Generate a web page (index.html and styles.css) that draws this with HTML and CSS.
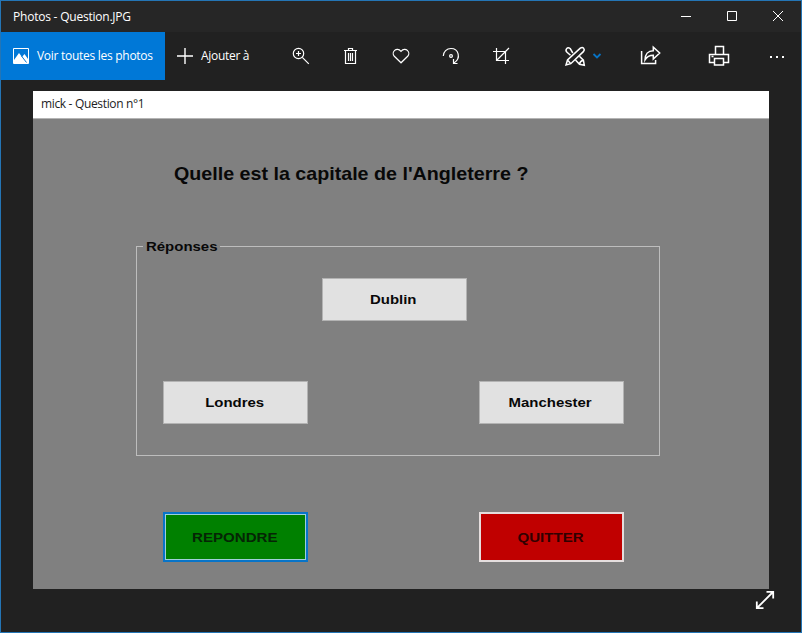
FILE: index.html
```html
<!DOCTYPE html>
<html lang="fr">
<head>
<meta charset="utf-8">
<title>Photos - Question.JPG</title>
<link rel="stylesheet" href="styles.css">
</head>
<body>
<div class="window">
  <header class="titlebar">
    <span class="title">Photos - Question.JPG</span>
    <div class="caption">
      <svg width="46" height="31" viewBox="0 0 46 31"><path d="M18 15.5h10"/></svg>
      <svg width="46" height="31" viewBox="0 0 46 31"><path d="M18.500 10.500h9v9h-9z"/></svg>
      <svg width="46" height="31" viewBox="0 0 46 31"><path d="M18 10l10 10M28 10l-10 10"/></svg>
    </div>
  </header>
  <nav class="toolbar">
    <div class="all-photos">
      <svg width="16" height="16" viewBox="0 0 16 16"><path d="M.5.5h15v15H.5z"/><path class="solid" d="M1 12l5-7 3 4 2.500-3L15 11v4H1z"/><path class="ridge" d="M8.500 8l5 6.500"/></svg>
      <span class="all-label">Voir toutes les photos</span>
    </div>
    <div class="add">
      <svg width="16" height="16" viewBox="0 0 16 16"><path class="plus" d="M8 0v16M0 8h16"/></svg>
      <span class="add-label">Ajouter à</span>
    </div>
    <div class="edit">
      <svg class="icon" viewBox="0 0 24 24"><circle cx="9.500" cy="9.500" r="5.200"/><path d="M13.300 13.300l6.500 6.500M9.500 7v5M7 9.500h5"/></svg>
      <svg class="icon" viewBox="0 0 24 24"><path d="M5 6.500h13M9.500 6V4.500h4V6M6.500 7v12.500h10V7M9.500 9v8M11.500 9v8M13.500 9v8"/></svg>
      <svg class="icon" viewBox="0 0 24 24"><path d="M12 18.800L5.300 12.300C1.800 8.500 7.500 2 12 7.300 16.500 2 22.200 8.500 18.700 12.300z"/></svg>
      <svg class="icon" viewBox="0 0 24 24"><path d="M4.300 12A7.600 7.600 0 0 1 12 4.500C19.500 4.500 22.500 14 15 19M14.500 15v4.500h4"/><circle cx="12" cy="12" r="1.400"/></svg>
      <svg class="icon" viewBox="0 0 24 24"><path d="M7.500 4v12.500H20M4 7.500h12.500V20M7.500 16.500L20 4"/></svg>
    </div>
    <div class="tools">
      <svg class="icon" viewBox="0 0 24 24"><g class="heavy"><path d="M3 21l1.500-5L17.300 4.200q2-1.500 3.300 0t0 3.200L7.800 19.700zM4.500 16l3.300 3.700"/><path d="M9.800 9L7.200 4.500Q5 2.800 3.600 4.600T4 8.200L7.500 11.200M12.500 16l4 4.300 4.800.9-.9-5-4-4M16.500 20q.5-3 3.800-3.800"/></g></svg>
      <svg class="chevron" width="10" height="24" viewBox="0 0 10 24"><path d="M1.500 10L5 13.500 8.500 10"/></svg>
    </div>
    <div class="share">
      <svg class="icon" viewBox="0 0 24 24"><path class="mid" d="M3.600 7v12.400h14V16M7 16C7 10.500 10 6.800 15.300 6.800V3.200L21.700 9l-6.400 6v-3.700C12 11.300 9 12.500 7 16z"/></svg>
    </div>
    <div class="print">
      <svg class="icon" viewBox="0 0 24 24"><path class="mid" d="M8.500 10.500v-8h8v8M7.500 18.500h-5v-8h19v8h-5M7.500 14.500h9V21h-9zM4.500 12.500h2"/></svg>
    </div>
    <div class="more">
      <svg class="icon" viewBox="0 0 24 24"><path class="solid" d="M5 12h2v2H5zM11 12h2v2h-2zM17 12h2v2h-2z"/></svg>
    </div>
  </nav>
  <main class="stage">
    <section class="photo">
      <div class="form-title"><span>mick - Question n°1</span></div>
      <div class="form">
        <h1><span>Quelle est la capitale de l'Angleterre ?</span></h1>
        <fieldset>
          <legend><span>Réponses</span></legend>
          <button class="answer dublin"><span>Dublin</span></button>
          <div class="pair">
            <button class="answer"><span>Londres</span></button>
            <button class="answer"><span>Manchester</span></button>
          </div>
        </fieldset>
        <div class="actions">
          <button class="go"><span>REPONDRE</span></button>
          <button class="quit"><span>QUITTER</span></button>
        </div>
      </div>
    </section>
    <svg class="expand" width="20" height="20" viewBox="0 0 20 20"><path d="M2 18L18 2M11.500 1.800h6.700v6.700M1.800 11.500v6.700h6.700"/></svg>
  </main>
</div>
</body>
</html>
```
FILE: styles.css
```css
* { box-sizing: border-box; }
body { margin: 0; background: #212121; overflow: hidden; }
svg { display: block; flex: none; fill: none; stroke: #fff; stroke-width: 1; }
svg .solid { fill: #fff; stroke: none; }
.window {
  width: 802px; height: 633px;
  border: 1px solid #2475b5;
  background: #212121;
  color: #fff;
  font: 12px/16px "Open Sans", "Noto Sans", sans-serif;
  display: flex; flex-direction: column;
}
span { white-space: nowrap; }
.titlebar { height: 31px; background: #262626; display: flex; justify-content: space-between; align-items: center; padding-left: 12px; }
.title { letter-spacing: -0.22px; }
.caption { display: flex; }
.toolbar { height: 48px; display: flex; align-items: center; }
.all-photos { width: 164px; height: 48px; background: #0078d7; display: flex; align-items: center; gap: 8px; padding-left: 12px; }
.all-photos .ridge { stroke: #0078d7; }
.all-label { letter-spacing: -0.28px; }
.add { width: 110px; display: flex; align-items: center; gap: 8px; padding-left: 12px; }
.plus { stroke-width: 1.4; }
.add-label { letter-spacing: -0.3px; }
.icon { width: 24px; height: 24px; stroke-width: 1.2; }
.edit { display: flex; gap: 26px; padding-left: 14px; width: 288px; }
.heavy { stroke-width: 1.5; }
.mid { stroke-width: 1.5; }
.tools { width: 75px; display: flex; gap: 5px; }
.tools .chevron { stroke: #0873c4; stroke-width: 1.8; }
.share { width: 69px; }
.print { width: 58px; }
.stage { flex: 1; padding: 11px 0 0 32px; position: relative; }
.photo { width: 736px; height: 498px; background: #808080; color: #080808; }
.form-title { height: 27px; background: #fff; color: #222; padding: 5px 8px; line-height: 16px; letter-spacing: -0.34px; }
.form { height: 471px; padding: 44px 0 0 103px; border-top: 1px solid #b4b4b4; font-family: "Liberation Sans", Arial, sans-serif; }
.form h1 { margin: 0 0 0 38px; font-size: 19px; line-height: 22px; font-weight: bold; }
h1 span, legend span, button span { display: inline-block; }
h1 span { transform: scaleX(1.035); transform-origin: left; }
fieldset { width: 524px; height: 219px; margin: 52px 0 0; padding: 0; border: 1px solid #bdbdbd; }
legend { width: 77px; margin-left: 6px; padding: 0 3px; font-size: 13px; line-height: 18px; font-weight: bold; }
legend span { transform: translateY(1px) scaleX(1.15); transform-origin: left; }
button { display: block; font: bold 13px/16px "Liberation Sans", Arial, sans-serif; padding: 0; color: #080808; }
button span { transform: translateX(-1px) scaleX(1.15); }
.answer { width: 145px; height: 43px; background: #e1e1e1; border: 1px solid #b3b3b3; }
.dublin { margin: 23px 0 0 185px; }
.pair, .actions { display: flex; gap: 171px; padding-left: 26px; }
.pair { padding-top: 60px; }
.actions { padding-left: 27px; padding-top: 56px; }
.go, .quit { width: 145px; height: 50px; }
.go span, .quit span { transform: translate(-1px, 1px) scaleX(1.16); }
.go { background: #008000; border: 2px solid #0874c8; box-shadow: inset 0 0 0 1px #a0d0d8; color: #052505; }
.quit { background: #c00000; border: 2px solid #e5dede; color: #300000; }
.expand { position: absolute; left: 754px; top: 510px; stroke-width: 1.8; }
```
